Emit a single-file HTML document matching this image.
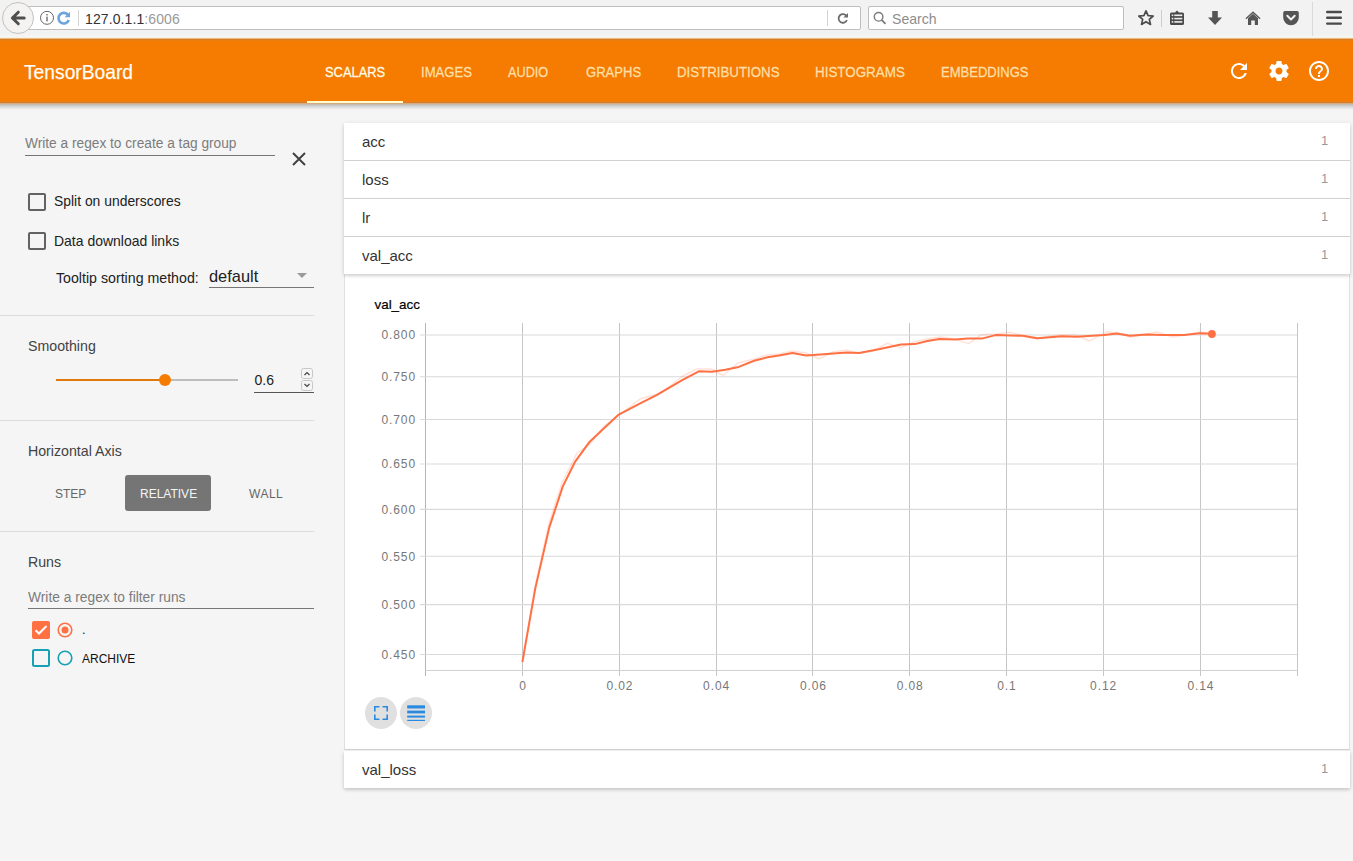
<!DOCTYPE html>
<html><head><meta charset="utf-8">
<style>
*{box-sizing:border-box;margin:0;padding:0}
html,body{width:1353px;height:861px;overflow:hidden;background:#f5f5f5;font-family:"Liberation Sans",sans-serif;position:relative}
.a{position:absolute;white-space:nowrap}
/* browser toolbar */
#tb{position:absolute;left:0;top:0;width:1353px;height:38px;background:#f2f2f2;border-bottom:1px solid #fcf0e1;box-shadow:inset 0 -2px 0 #f4f5f5}
#url{position:absolute;left:24px;top:6px;width:837px;height:24px;background:#fff;border:1px solid #c0bebb;border-radius:0 2px 2px 0}
#back{position:absolute;left:2px;top:2px;width:32px;height:32px;border-radius:50%;background:#f4f3f2;border:1px solid #c5c2be}
#search{position:absolute;left:868px;top:6px;width:256px;height:24px;background:#fff;border:1px solid #c0bebb;border-radius:2px}
/* header */
#hdr{position:absolute;left:0;top:38px;width:1353px;height:66px;background:linear-gradient(to bottom,#ebb982 0,#ebb982 1px,#d77d23 1px,#d77d23 2px,#e87d12 2px,#e87d12 3px,#f57c00 3px,#f57c00 63px,#eb8019 63px,#eb8019 64px,#d27d2d 64px,#d27d2d 65px,#d7aa7d 65px);border-top:1px solid transparent;background-origin:border-box;z-index:5}
#hsh{position:absolute;left:0;top:104px;width:1353px;height:6px;background:linear-gradient(to bottom,#c8bcaf 0,#c8bcaf 1px,#c8cacd 1px,#c8cacd 2px,#d4d4d7 2px,#d4d4d7 3px,#e1e1e3 3px,#e1e1e3 4px,#e9e7e7 4px,#e9e7e7 5px,#f3f3f3 5px);z-index:4}
.tab{position:absolute;top:24.1px;font-size:15.2px;color:#fedfa8;transform:scaleX(0.849);transform-origin:0 0;-webkit-text-stroke:0.3px currentColor;white-space:nowrap}
/* sidebar */
.txt{color:#212121;font-size:14px}
.hdg{color:#424242;font-size:15px;transform:scaleX(0.945);transform-origin:0 0}
.div{position:absolute;left:0;width:314px;height:1px;background:#dcdcdc}
.cb{position:absolute;width:18px;height:18px;border:2px solid #626262;border-radius:2px}
/* cards */
.card{position:absolute;z-index:2;left:344px;width:1006px;background:#fff;box-shadow:0 2px 3px 0 rgba(0,0,0,.12),0 1px 5px 0 rgba(0,0,0,.10)}
.row{position:absolute;left:0;width:1006px;height:38px;border-bottom:1px solid #d0d0d0}
.rt{position:absolute;left:18px;top:10px;font-size:15px;color:#333}
.rc{position:absolute;left:977px;top:10px;font-size:13px;color:#999}
</style></head><body>

<!-- Firefox toolbar -->
<div id="tb"></div>
<div id="url"></div>
<div id="back"></div>
<div id="search"></div>

<!-- header -->
<div id="hsh"></div>
<div id="hdr">
  <div class="a" style="left:24px;top:21px;font-size:21px;color:#fffdf5;transform:scaleX(0.916);transform-origin:0 0;-webkit-text-stroke:0.25px #fffdf5">TensorBoard</div>
  <div class="tab" style="left:325px;color:#fffbe6">SCALARS</div>
  <div class="tab" style="left:421px;transform:scaleX(0.863)">IMAGES</div>
  <div class="tab" style="left:508px;transform:scaleX(0.837)">AUDIO</div>
  <div class="tab" style="left:586px;transform:scaleX(0.859)">GRAPHS</div>
  <div class="tab" style="left:677px;transform:scaleX(0.874)">DISTRIBUTIONS</div>
  <div class="tab" style="left:815px;transform:scaleX(0.882)">HISTOGRAMS</div>
  <div class="tab" style="left:941px;transform:scaleX(0.857)">EMBEDDINGS</div>
  <div class="a" style="left:307px;top:62px;width:96px;height:2px;background:#ffffd0"></div>
</div>

<!-- sidebar -->
<div class="a" style="left:25px;top:134.4px;font-size:15.5px;color:#7c7c7c;transform:scaleX(0.884);transform-origin:0 0">Write a regex to create a tag group</div>
<div class="a" style="left:25px;top:155px;width:250px;height:1px;background:#757575"></div>
<svg class="a" style="left:290px;top:150px" width="18" height="18" viewBox="0 0 18 18"><path d="M3 3L15 15M15 3L3 15" stroke="#424242" stroke-width="2"/></svg>

<div class="cb" style="left:28px;top:193px"></div>
<div class="a txt" style="left:54px;top:193.2px;font-size:14.88px;transform:scaleX(0.934);transform-origin:0 0">Split on underscores</div>
<div class="cb" style="left:28px;top:232px"></div>
<div class="a txt" style="left:54px;top:231.5px;font-size:14.95px;transform:scaleX(0.936);transform-origin:0 0">Data download links</div>
<div class="a txt" style="left:56px;top:268.5px;font-size:15.45px;transform:scaleX(0.919);transform-origin:0 0">Tooltip sorting method:</div>
<div class="a txt" style="left:209px;top:267px;font-size:16.4px">default</div>
<div class="a" style="left:209px;top:287px;width:105px;height:1px;background:#757575"></div>
<svg class="a" style="left:296px;top:272px" width="12" height="7" viewBox="0 0 12 7"><path d="M1 1H11L6 6Z" fill="#9a9a9a"/></svg>
<div class="div" style="top:315px"></div>

<div class="a hdg" style="left:28px;top:336.8px">Smoothing</div>
<div class="a" style="left:56px;top:379px;width:109px;height:2px;background:#e0780e"></div>
<div class="a" style="left:165px;top:379px;width:73px;height:2px;background:#bdbdbd"></div>
<div class="a" style="left:159px;top:374px;width:12px;height:12px;border-radius:50%;background:#f57c00"></div>
<div class="a txt" style="left:254.5px;top:372.4px;font-size:14px">0.6</div>
<div class="a" style="left:254px;top:392px;width:60px;height:1px;background:#555"></div>
<svg class="a" style="left:300px;top:367px" width="14" height="25" viewBox="0 0 14 25">
 <rect x="1.5" y="1.5" width="11" height="10" rx="2" fill="none" stroke="#c8c8c8"/>
 <rect x="1.5" y="13.5" width="11" height="10" rx="2" fill="none" stroke="#c8c8c8"/>
 <path d="M4.5 8L7 5.5L9.5 8" fill="none" stroke="#444" stroke-width="1.2"/>
 <path d="M4.5 17L7 19.5L9.5 17" fill="none" stroke="#444" stroke-width="1.2"/>
</svg>
<div class="div" style="top:420px"></div>

<div class="a hdg" style="left:28px;top:441.8px">Horizontal Axis</div>
<div class="a" style="left:55px;top:487px;font-size:12px;color:#666">STEP</div>
<div class="a" style="left:125px;top:475px;width:86px;height:36px;border-radius:3px;background:#757575"></div>
<div class="a" style="left:140px;top:487px;font-size:12px;color:#f5f5f5">RELATIVE</div>
<div class="a" style="left:249px;top:487px;font-size:12px;color:#666;letter-spacing:0.5px">WALL</div>
<div class="div" style="top:531px"></div>

<div class="a hdg" style="left:28px;top:552.8px">Runs</div>
<div class="a" style="left:28px;top:588.2px;font-size:15.5px;color:#7c7c7c;transform:scaleX(0.889);transform-origin:0 0">Write a regex to filter runs</div>
<div class="a" style="left:28px;top:608px;width:286px;height:1px;background:#757575"></div>
<svg class="a" style="left:32px;top:621px" width="18" height="18" viewBox="0 0 18 18"><rect x="0" y="0" width="18" height="18" rx="2" fill="#ff7043"/><path d="M3.5 9.2L7 12.5L14.5 5" fill="none" stroke="#fff" stroke-width="2"/></svg>
<svg class="a" style="left:57px;top:622px" width="16" height="16" viewBox="0 0 16 16"><circle cx="8" cy="8" r="6.8" fill="none" stroke="#ff7043" stroke-width="1.6"/><circle cx="8" cy="8" r="3.5" fill="#ff7043"/></svg>
<div class="a" style="left:82px;top:622px;font-size:13px;color:#222">.</div>
<svg class="a" style="left:32px;top:649px" width="18" height="18" viewBox="0 0 18 18"><rect x="1" y="1" width="16" height="16" rx="1.5" fill="none" stroke="#15a0b4" stroke-width="2"/></svg>
<svg class="a" style="left:57px;top:650px" width="16" height="16" viewBox="0 0 16 16"><circle cx="8" cy="8" r="6.8" fill="none" stroke="#15a0b4" stroke-width="1.6"/></svg>
<div class="a" style="left:82px;top:651.5px;font-size:12px;color:#111">ARCHIVE</div>

<!-- main cards -->
<div class="card" style="top:123px;height:151px">
  <div class="row" style="top:0"><div class="a rt">acc</div><div class="a rc">1</div></div>
  <div class="row" style="top:38px"><div class="a rt">loss</div><div class="a rc">1</div></div>
  <div class="row" style="top:76px"><div class="a rt">lr</div><div class="a rc">1</div></div>
  <div class="row" style="top:114px;border-bottom:none;height:37px"><div class="a rt">val_acc</div><div class="a rc">1</div></div>
</div>
<div class="a" style="left:344px;top:274px;width:1006px;height:476px;background:#fff;border-left:1px solid #e0e0e0;border-right:1px solid #e0e0e0;border-bottom:1px solid #d4d4d4"></div>
<div class="a" style="left:374.5px;top:297px;font-size:13.4px;color:#000;-webkit-text-stroke:0.2px #000">val_acc</div>
<div class="a" style="left:365px;top:697px;width:32px;height:32px;border-radius:50%;background:#e0e0e0"></div>
<div class="a" style="left:400px;top:697px;width:32px;height:32px;border-radius:50%;background:#e0e0e0"></div>
<svg class="a" style="left:365px;top:697px" width="32" height="32" viewBox="0 0 32 32"><path d="M9.8 14.5V9.8H14.5M17.5 9.8H22.2V14.5M22.2 17.5V22.2H17.5M14.5 22.2H9.8V17.5" fill="none" stroke="#2a8ae0" stroke-width="1.6"/></svg>
<svg class="a" style="left:400px;top:697px" width="32" height="32" viewBox="0 0 32 32"><rect x="7.2" y="8.3" width="17.8" height="3.2" fill="#2a8ae0"/><rect x="7.2" y="13.6" width="17.8" height="2.8" fill="#2a8ae0"/><rect x="7.2" y="18.6" width="17.8" height="2" fill="#2a8ae0"/><rect x="7.2" y="22.8" width="17.8" height="1.2" fill="#2a8ae0"/></svg>
<div class="card" style="top:751px;height:37px">
  <div class="a rt">val_loss</div><div class="a rc">1</div>
</div>

<svg class="a" style="left:0;top:0" width="1353" height="861" viewBox="0 0 1353 861">
<g shape-rendering="crispEdges">
<line x1="522.5" y1="323" x2="522.5" y2="676" stroke="#c6c6c6" stroke-width="1"/>
<line x1="619.5" y1="323" x2="619.5" y2="676" stroke="#c6c6c6" stroke-width="1"/>
<line x1="716.5" y1="323" x2="716.5" y2="676" stroke="#c6c6c6" stroke-width="1"/>
<line x1="812.5" y1="323" x2="812.5" y2="676" stroke="#c6c6c6" stroke-width="1"/>
<line x1="909.5" y1="323" x2="909.5" y2="676" stroke="#c6c6c6" stroke-width="1"/>
<line x1="1006.5" y1="323" x2="1006.5" y2="676" stroke="#c6c6c6" stroke-width="1"/>
<line x1="1103.5" y1="323" x2="1103.5" y2="676" stroke="#c6c6c6" stroke-width="1"/>
<line x1="1200.5" y1="323" x2="1200.5" y2="676" stroke="#c6c6c6" stroke-width="1"/>
<line x1="425.5" y1="323" x2="425.5" y2="676" stroke="#b4b4b4" stroke-width="1"/>
<line x1="1297.5" y1="323" x2="1297.5" y2="676" stroke="#c6c6c6" stroke-width="1"/>
<line x1="425" y1="670.5" x2="1298" y2="670.5" stroke="#d0d0d0" stroke-width="1.4"/>
</g>
<line x1="420" y1="335.0" x2="1297" y2="335.0" stroke="#d9d9d9" stroke-width="1.1"/>
<line x1="420" y1="376.8" x2="1297" y2="376.8" stroke="#d9d9d9" stroke-width="1.1"/>
<line x1="420" y1="419.5" x2="1297" y2="419.5" stroke="#d9d9d9" stroke-width="1.1"/>
<line x1="420" y1="464.0" x2="1297" y2="464.0" stroke="#d9d9d9" stroke-width="1.1"/>
<line x1="420" y1="509.4" x2="1297" y2="509.4" stroke="#d9d9d9" stroke-width="1.1"/>
<line x1="420" y1="556.3" x2="1297" y2="556.3" stroke="#d9d9d9" stroke-width="1.1"/>
<line x1="420" y1="604.6" x2="1297" y2="604.6" stroke="#d9d9d9" stroke-width="1.1"/>
<line x1="420" y1="654.5" x2="1297" y2="654.5" stroke="#d9d9d9" stroke-width="1.1"/>
<g font-family="Liberation Sans" font-size="12" fill="#777" letter-spacing="0.9">
<text x="416" y="339.3" text-anchor="end">0.800</text>
<text x="416" y="381.1" text-anchor="end">0.750</text>
<text x="416" y="423.8" text-anchor="end">0.700</text>
<text x="416" y="468.3" text-anchor="end">0.650</text>
<text x="416" y="513.7" text-anchor="end">0.600</text>
<text x="416" y="560.6" text-anchor="end">0.550</text>
<text x="416" y="608.9" text-anchor="end">0.500</text>
<text x="416" y="658.8" text-anchor="end">0.450</text>
<text x="523.1" y="690.3" text-anchor="middle">0</text>
<text x="619.9" y="690.3" text-anchor="middle">0.02</text>
<text x="716.6" y="690.3" text-anchor="middle">0.04</text>
<text x="813.4" y="690.3" text-anchor="middle">0.06</text>
<text x="910.2" y="690.3" text-anchor="middle">0.08</text>
<text x="1006.9" y="690.3" text-anchor="middle">0.1</text>
<text x="1103.6" y="690.3" text-anchor="middle">0.12</text>
<text x="1200.9" y="690.3" text-anchor="middle">0.14</text>
</g>
<path d="M522.4 662.0 L535.3 585.0 L549.3 522.0 L562.3 482.0 L577.0 453.0 L590.0 444.0 L604.0 426.0 L618.0 416.0 L640.0 399.0 L658.0 394.0 L670.0 386.0 L683.0 376.0 L697.0 369.0 L711.0 369.0 L723.0 375.5 L738.0 363.0 L754.0 359.0 L767.0 355.0 L779.0 354.0 L792.0 351.0 L806.0 353.0 L819.4 358.8 L833.0 352.0 L846.0 350.0 L859.0 353.0 L873.0 351.0 L886.9 343.3 L900.9 347.6 L914.0 342.0 L927.0 339.0 L940.0 337.0 L955.0 339.0 L968.4 343.6 L981.6 334.7 L995.6 334.0 L1009.8 332.2 L1023.0 336.0 L1037.0 339.0 L1050.0 336.0 L1062.0 335.0 L1076.0 335.0 L1089.4 341.1 L1107.3 331.7 L1117.0 333.0 L1130.0 337.0 L1143.0 335.0 L1157.0 331.7 L1172.4 337.0 L1186.0 335.0 L1200.0 332.0 L1211.9 333.7" fill="none" stroke="#ff7043" stroke-opacity="0.2" stroke-width="1.5" stroke-linejoin="round"/>
<path d="M522.4 662.0 L535.3 588.4 L549.3 527.4 L562.8 486.4 L574.8 462.2 L589.7 441.7 L618.7 414.6 L640.7 403.2 L657.0 394.8 L682.6 379.9 L698.8 371.3 L711.8 371.7 L725.3 369.8 L738.7 366.9 L754.1 360.8 L767.5 357.3 L779.1 355.4 L792.5 353.1 L806.0 355.4 L820.2 354.5 L846.6 352.6 L859.0 353.1 L877.6 349.5 L900.9 344.5 L914.9 344.1 L927.3 341.0 L939.7 338.9 L955.2 339.4 L967.6 338.6 L981.6 338.6 L995.6 335.1 L1022.8 335.8 L1037.4 338.2 L1061.8 336.3 L1076.4 336.7 L1104.0 335.1 L1117.0 333.5 L1130.0 335.8 L1146.3 334.6 L1162.6 335.0 L1183.7 335.1 L1200.0 333.3 L1211.9 333.7" fill="none" stroke="#ff7043" stroke-width="2" stroke-linejoin="round"/>
<circle cx="1211.9" cy="334" r="3.9" fill="#ff7043"/>
</svg>
<!-- toolbar icons -->
<svg class="a" style="left:9px;top:9px" width="18" height="18" viewBox="0 0 18 18"><path d="M9.3 3.2L3.4 9L9.3 14.8M4.2 9H15.2" fill="none" stroke="#4f4f4f" stroke-width="3" stroke-linejoin="round" stroke-linecap="round"/></svg>
<svg class="a" style="left:39px;top:10px" width="16" height="16" viewBox="0 0 16 16"><circle cx="8" cy="7.8" r="6.5" fill="none" stroke="#666" stroke-width="1"/><rect x="7.25" y="6.6" width="1.5" height="4.8" fill="#777"/><rect x="7.25" y="4" width="1.5" height="1.5" fill="#777"/></svg>
<svg class="a" style="left:56px;top:10px" width="16" height="16" viewBox="0 0 16 16"><path d="M12.2 5.2A5.3 5.3 0 1 0 12.8 10" fill="none" stroke="#6fa3dc" stroke-width="2.6"/><path d="M14 1.8V7.2H8.6Z" fill="#6fa3dc"/></svg>
<div class="a" style="left:78px;top:10px;width:1px;height:16px;background:#d4d4d4"></div>
<div class="a" style="left:85px;top:10.9px;font-size:14px;color:#333;letter-spacing:0.1px">127.0.1.1<span style="color:#999">:6006</span></div>
<div class="a" style="left:827px;top:10px;width:1px;height:16px;background:#d4d4d4"></div>
<svg class="a" style="left:835px;top:10px" width="16" height="16" viewBox="0 0 16 16"><path d="M11.6 6.2A4.3 4.3 0 1 0 11.9 10" fill="none" stroke="#6d6d6d" stroke-width="1.8"/><path d="M13 3V7.6H8.4Z" fill="#6d6d6d"/></svg>
<svg class="a" style="left:872px;top:10px" width="16" height="16" viewBox="0 0 16 16"><circle cx="6.6" cy="6.8" r="4.3" fill="none" stroke="#7a7a7a" stroke-width="1.4"/><path d="M9.6 9.8L13.5 13.8" stroke="#7a7a7a" stroke-width="1.8"/></svg>
<div class="a" style="left:892px;top:10.9px;font-size:14.1px;color:#8e8e8e">Search</div>
<svg class="a" style="left:1137px;top:9px" width="18" height="18" viewBox="0 0 18 18"><path d="M9 1.8L11.1 6.6L16.2 7L12.3 10.4L13.5 15.4L9 12.7L4.5 15.4L5.7 10.4L1.8 7L6.9 6.6Z" fill="none" stroke="#4a4a4a" stroke-width="1.7" stroke-linejoin="round"/></svg>
<div class="a" style="left:1161px;top:10px;width:1px;height:17px;background:#d0cecb"></div>
<svg class="a" style="left:1169px;top:9px" width="16" height="17" viewBox="0 0 16 17"><path d="M8 1.5L10 3.5H13.5A1.5 1.5 0 0 1 15 5V14.5A1.5 1.5 0 0 1 13.5 16H2.5A1.5 1.5 0 0 1 1 14.5V5A1.5 1.5 0 0 1 2.5 3.5H6Z" fill="#4a4a4a"/><rect x="2.7" y="5.5" width="1.6" height="1.6" fill="#eee"/><rect x="2.7" y="8.8" width="1.6" height="1.6" fill="#eee"/><rect x="2.7" y="12.1" width="1.6" height="1.6" fill="#eee"/><rect x="5.3" y="5.5" width="8" height="1.6" fill="#eee"/><rect x="5.3" y="8.8" width="8" height="1.6" fill="#eee"/><rect x="5.3" y="12.1" width="8" height="1.6" fill="#eee"/></svg>
<svg class="a" style="left:1207px;top:10px" width="16" height="16" viewBox="0 0 16 16"><path d="M5.2 1H10.8V7.6H15L8 15L1 7.6H5.2Z" fill="#555"/></svg>
<svg class="a" style="left:1245px;top:10px" width="16" height="16" viewBox="0 0 16 16"><path d="M8 1.2L15.5 8.2L14.6 9.2L8 3.2L1.4 9.2L0.5 8.2Z" fill="#555"/><path d="M3 8.2L8 3.8L13 8.2V15H9.8V10.4H6.2V15H3Z" fill="#555"/></svg>
<svg class="a" style="left:1283px;top:10px" width="16" height="16" viewBox="0 0 16 16"><path d="M1.9 1H14.1A1.7 1.7 0 0 1 15.8 2.7V7.4A7.8 7.8 0 0 1 0.2 7.4V2.7A1.7 1.7 0 0 1 1.9 1Z" fill="#555"/><path d="M4.3 5.8L8 9.5L11.7 5.8" fill="none" stroke="#f2f2f2" stroke-width="2" stroke-linecap="round" stroke-linejoin="round"/></svg>
<div class="a" style="left:1312px;top:2px;width:1px;height:34px;background:#dcdad7"></div>
<svg class="a" style="left:1325px;top:9px" width="18" height="18" viewBox="0 0 18 18"><path d="M2.2 3H15.8M2.2 8.8H15.8M2.2 14.6H15.8" stroke="#4a4a4a" stroke-width="2.4" stroke-linecap="round"/></svg>
<!-- header icons -->
<svg class="a" style="left:1227px;top:59px;z-index:6" width="24" height="24" viewBox="0 0 24 24"><path fill="#fff" d="M17.65 6.35C16.2 4.9 14.21 4 12 4c-4.42 0-7.99 3.58-7.99 8s3.57 8 7.99 8c3.73 0 6.84-2.55 7.73-6h-2.08c-.82 2.33-3.04 4-5.65 4-3.31 0-6-2.690-6-6s2.69-6 6-6c1.66 0 3.14.69 4.22 1.78L13 11h7V4l-2.35 2.35z"/></svg>
<svg class="a" style="left:1267px;top:59px;z-index:6" width="24" height="24" viewBox="0 0 24 24"><path fill="#fff" d="M19.43 12.98c.04-.32.07-.64.07-.98s-.03-.66-.07-.98l2.11-1.65c.19-.15.24-.42.12-.64l-2-3.46c-.12-.22-.39-.3-.61-.22l-2.49 1c-.52-.4-1.08-.73-1.690-.98l-.38-2.65C14.46 2.18 14.25 2 14 2h-4c-.25 0-.46.18-.49.42l-.38 2.65c-.61.25-1.17.59-1.69.98l-2.49-1c-.23-.09-.49 0-.61.22l-2 3.46c-.13.22-.07.49.12.64l2.11 1.65c-.04.32-.07.65-.07.98s.03.66.07.98l-2.11 1.65c-.19.15-.24.42-.12.64l2 3.46c.12.22.39.3.61.22l2.49-1c.52.4 1.08.73 1.69.98l.38 2.65c.03.24.24.42.49.42h4c.25 0 .46-.18.49-.42l.38-2.65c.61-.25 1.17-.59 1.69-.98l2.49 1c.23.09.49 0 .61-.22l2-3.46c.12-.22.07-.49-.12-.64l-2.11-1.65zM12 15.5c-1.93 0-3.5-1.57-3.5-3.5s1.57-3.5 3.5-3.5 3.5 1.57 3.5 3.5-1.57 3.5-3.5 3.5z"/></svg>
<svg class="a" style="left:1307px;top:59px;z-index:6" width="24" height="24" viewBox="0 0 24 24"><path fill="#fff" d="M11 18h2v-2h-2v2zm1-16C6.48 2 2 6.48 2 12s4.48 10 10 10 10-4.48 10-10S17.52 2 12 2zm0 18c-4.41 0-8-3.59-8-8s3.59-8 8-8 8 3.59 8 8-3.59 8-8 8zm0-14c-2.21 0-4 1.79-4 4h2c0-1.1.9-2 2-2s2 .9 2 2c0 2-3 1.75-3 5h2c0-2.25 3-2.5 3-5 0-2.21-1.79-4-4-4z"/></svg>

</body></html>
